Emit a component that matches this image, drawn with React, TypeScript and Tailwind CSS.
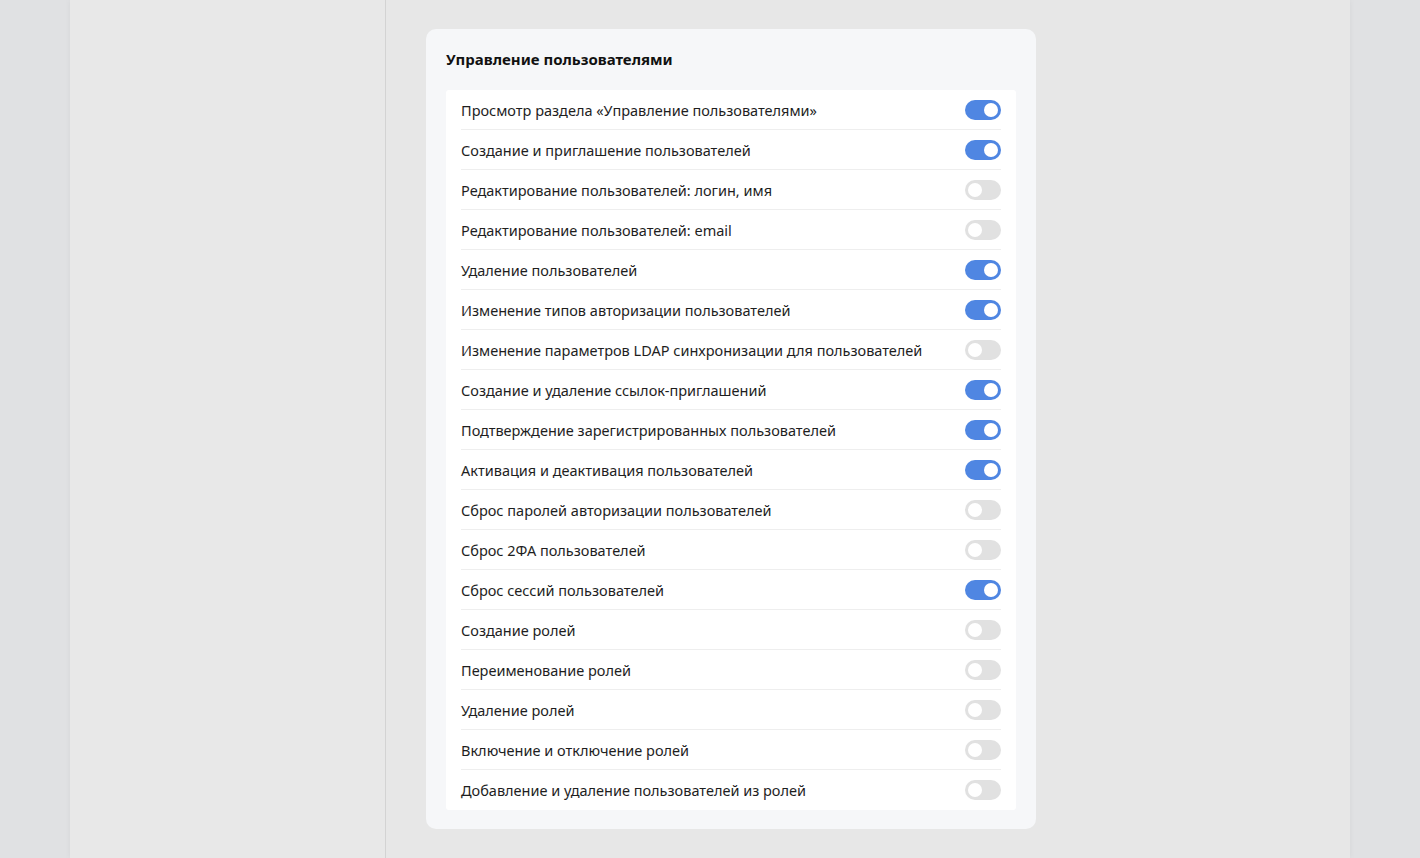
import React from 'react';

const permissions: { label: string; enabled: boolean }[] = [
  { label: 'Просмотр раздела «Управление пользователями»', enabled: true },
  { label: 'Создание и приглашение пользователей', enabled: true },
  { label: 'Редактирование пользователей: логин, имя', enabled: false },
  { label: 'Редактирование пользователей: email', enabled: false },
  { label: 'Удаление пользователей', enabled: true },
  { label: 'Изменение типов авторизации пользователей', enabled: true },
  { label: 'Изменение параметров LDAP синхронизации для пользователей', enabled: false },
  { label: 'Создание и удаление ссылок-приглашений', enabled: true },
  { label: 'Подтверждение зарегистрированных пользователей', enabled: true },
  { label: 'Активация и деактивация пользователей', enabled: true },
  { label: 'Сброс паролей авторизации пользователей', enabled: false },
  { label: 'Сброс 2ФА пользователей', enabled: false },
  { label: 'Сброс сессий пользователей', enabled: true },
  { label: 'Создание ролей', enabled: false },
  { label: 'Переименование ролей', enabled: false },
  { label: 'Удаление ролей', enabled: false },
  { label: 'Включение и отключение ролей', enabled: false },
  { label: 'Добавление и удаление пользователей из ролей', enabled: false },
];

const Toggle: React.FC<{ on: boolean; onClick: () => void }> = ({ on, onClick }) => (
  <button
    onClick={onClick}
    className={`relative h-5 w-9 shrink-0 rounded-full transition-colors ${
      on ? 'bg-[#4f86e2]' : 'bg-[#e1e1e1]'
    }`}
  >
    <span
      className={`absolute top-[3px] h-[14px] w-[14px] rounded-full bg-white transition-all ${
        on ? 'left-[19px]' : 'left-[3px]'
      }`}
    />
  </button>
);

export default function App() {
  const [state, setState] = React.useState(permissions.map(p => p.enabled));

  const toggle = (i: number) => {
    setState(s => s.map((v, idx) => (idx === i ? !v : v)));
  };

  return (
    <div
      className="flex h-[858px] w-full overflow-hidden bg-[#e0e1e3] text-[#1b1b1b]"
      style={{ fontFamily: '"Noto Sans", Lato, sans-serif' }}
    >
      <div className="flex h-full w-[1280px] ml-[70px] bg-[#e7e7e7] shadow-[0_0_6px_rgba(0,0,0,0.05)]">
        {/* sidebar */}
        <div className="h-full w-[316px] border-r border-[#d3d3d3] bg-[#e8e8e8]" />

        {/* content */}
        <div className="flex-1 pl-10 pt-[29px]">
          <div className="w-[610px] rounded-[10px] bg-[#f6f7f9] px-5 pb-[19px] pt-[18px]">
            <h2 className="mb-[19px] text-[15px] font-bold leading-[24px] text-[#111]">
              Управление пользователями
            </h2>
            <div className="rounded-[3px] bg-white pl-[15px] pr-[15px]">
              {permissions.map((p, i) => (
                <div
                  key={p.label}
                  className={`flex h-10 items-center justify-between ${
                    i < permissions.length - 1 ? 'border-b border-[#eeeeee]' : ''
                  }`}
                >
                  <span className="text-[14.5px] leading-5 text-[#1e1e1e]">{p.label}</span>
                  <Toggle on={state[i]} onClick={() => toggle(i)} />
                </div>
              ))}
            </div>
          </div>
        </div>
      </div>
    </div>
  );
}
